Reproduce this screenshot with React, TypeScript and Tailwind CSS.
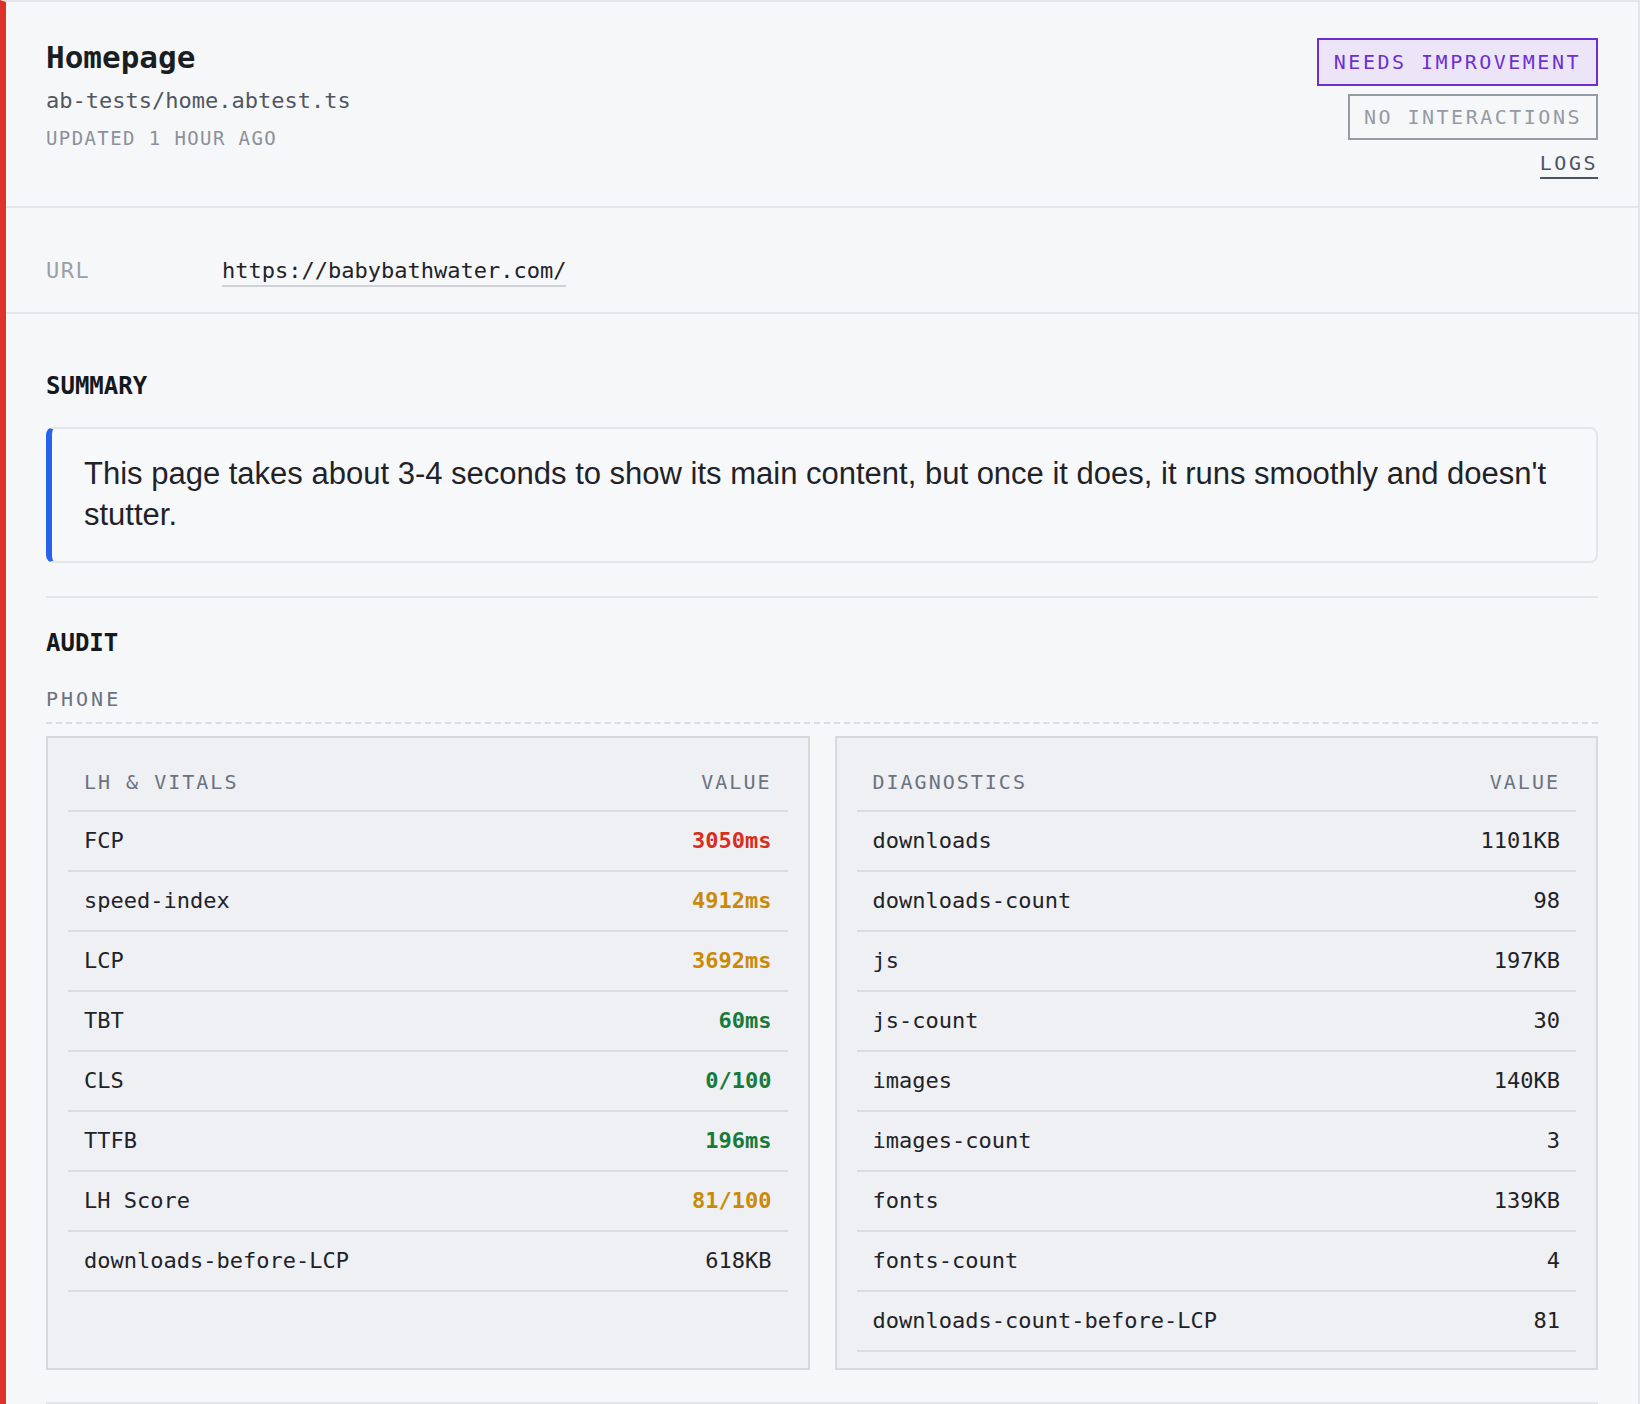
import React from 'react';

type Tone = 'red' | 'amber' | 'green' | 'plain';

type Metric = {
  name: string;
  value: string;
  tone: Tone;
};

const vitals: Metric[] = [
  { name: 'FCP', value: '3050ms', tone: 'red' },
  { name: 'speed-index', value: '4912ms', tone: 'amber' },
  { name: 'LCP', value: '3692ms', tone: 'amber' },
  { name: 'TBT', value: '60ms', tone: 'green' },
  { name: 'CLS', value: '0/100', tone: 'green' },
  { name: 'TTFB', value: '196ms', tone: 'green' },
  { name: 'LH Score', value: '81/100', tone: 'amber' },
  { name: 'downloads-before-LCP', value: '618KB', tone: 'plain' },
];

const diagnostics: Metric[] = [
  { name: 'downloads', value: '1101KB', tone: 'plain' },
  { name: 'downloads-count', value: '98', tone: 'plain' },
  { name: 'js', value: '197KB', tone: 'plain' },
  { name: 'js-count', value: '30', tone: 'plain' },
  { name: 'images', value: '140KB', tone: 'plain' },
  { name: 'images-count', value: '3', tone: 'plain' },
  { name: 'fonts', value: '139KB', tone: 'plain' },
  { name: 'fonts-count', value: '4', tone: 'plain' },
  { name: 'downloads-count-before-LCP', value: '81', tone: 'plain' },
];

const toneClass: Record<Tone, string> = {
  red: 'font-bold text-[#d92d20]',
  amber: 'font-bold text-[#c98a0a]',
  green: 'font-bold text-[#177a3a]',
  plain: 'text-[#1f2328]',
};

function MetricTable({ title, rows }: { title: string; rows: Metric[] }) {
  return (
    <div className="border-2 border-[#d6d9de] bg-[#eef0f3] px-5 py-4">
      {/* Column headings */}
      <div className="flex justify-between border-b-2 border-[#d9dce1] px-4 py-[14px] text-[20px] leading-[28px] tracking-[2px] text-[#6b7280]">
        <span>{title}</span>
        <span>VALUE</span>
      </div>
      {rows.map((row) => (
        <div
          key={row.name}
          className="flex justify-between border-b-2 border-[#d9dce1] px-4 py-[14px] text-[22px] leading-[30px] text-[#1f2328]"
        >
          <span>{row.name}</span>
          <span className={toneClass[row.tone]}>{row.value}</span>
        </div>
      ))}
    </div>
  );
}

export default function App() {
  return (
    <div className="h-[1404px] overflow-hidden bg-[#f6f7f9] font-['DejaVu_Sans_Mono','Liberation_Mono',monospace]">
      <div className="min-h-[1404px] border-2 border-b-0 border-l-[6px] border-[#e3e5e8] border-l-[#dc3328] bg-[#f6f7f9]">
        {/* Header */}
        <header className="flex items-start justify-between border-b-2 border-[#e3e5e8] px-10 pt-9 pb-[27px]">
          <div className="flex flex-col">
            <h1 className="text-[31px] font-bold leading-[38px] text-[#1a1d21]">Homepage</h1>
            <p className="mt-[10px] text-[22px] leading-[30px] text-[#50565f]">ab-tests/home.abtest.ts</p>
            <p className="mt-[9px] text-[19px] leading-[26px] tracking-[1.4px] text-[#8b9099]">UPDATED 1 HOUR AGO</p>
          </div>
          <div className="flex flex-col items-end">
            <span className="border-2 border-[#6d2fd0] bg-[#ece5f8] px-[15px] py-[8px] text-[20px] leading-[28px] tracking-[2.5px] text-[#6d2fd0]">
              NEEDS IMPROVEMENT
            </span>
            <span className="mt-2 border-2 border-[#959ba4] px-[14px] py-[7px] text-[20px] leading-[28px] tracking-[2.5px] text-[#959ba4]">
              NO INTERACTIONS
            </span>
            <a className="mt-[9px] inline-block border-b-2 border-[#4b5563] text-[20px] leading-[28px] tracking-[2.5px] text-[#4b5563]">
              LOGS
            </a>
          </div>
        </header>

        {/* URL row */}
        <div className="flex items-start border-b-2 border-[#e3e5e8] px-10 pt-[49px] pb-[25px]">
          <span className="w-[176px] text-[22px] leading-[28px] tracking-[1.5px] text-[#9aa0a8]">URL</span>
          <span className="inline-block border-b-2 border-[#cfd3d8] text-[22px] leading-[28px] text-[#1f2328]">
            https://babybathwater.com/
          </span>
        </div>

        <div className="px-10">
          {/* Summary */}
          <section className="border-b-2 border-[#e3e5e8] pt-14 pb-[33px]">
            <h2 className="text-[24px] font-bold leading-[32px] text-[#15181c]">SUMMARY</h2>
            <div className="mt-[25px] rounded-lg border-2 border-l-[6px] border-[#e3e5e8] border-l-[#2563eb] bg-[#f7f8fa] pt-6 pb-[26px] pl-8 pr-7">
              <p className="font-['Liberation_Sans',Arial,sans-serif] text-[31px] leading-[41px] text-[#1f2328]">
                This page takes about 3-4 seconds to show its main content, but once it does, it runs smoothly and doesn't stutter.
              </p>
            </div>
          </section>

          {/* Audit */}
          <section className="border-b-2 border-[#e3e5e8] pt-[29px] pb-8">
            <h2 className="text-[24px] font-bold leading-[32px] text-[#15181c]">AUDIT</h2>
            <div className="mt-[26px] border-b-2 border-dashed border-[#d9dce1] pb-[9px] text-[20px] leading-[28px] tracking-[3px] text-[#6b7280]">
              PHONE
            </div>
            <div className="mt-3 grid grid-cols-2 gap-[25px]">
              <MetricTable title="LH & VITALS" rows={vitals} />
              <MetricTable title="DIAGNOSTICS" rows={diagnostics} />
            </div>
          </section>
        </div>
      </div>
    </div>
  );
}
